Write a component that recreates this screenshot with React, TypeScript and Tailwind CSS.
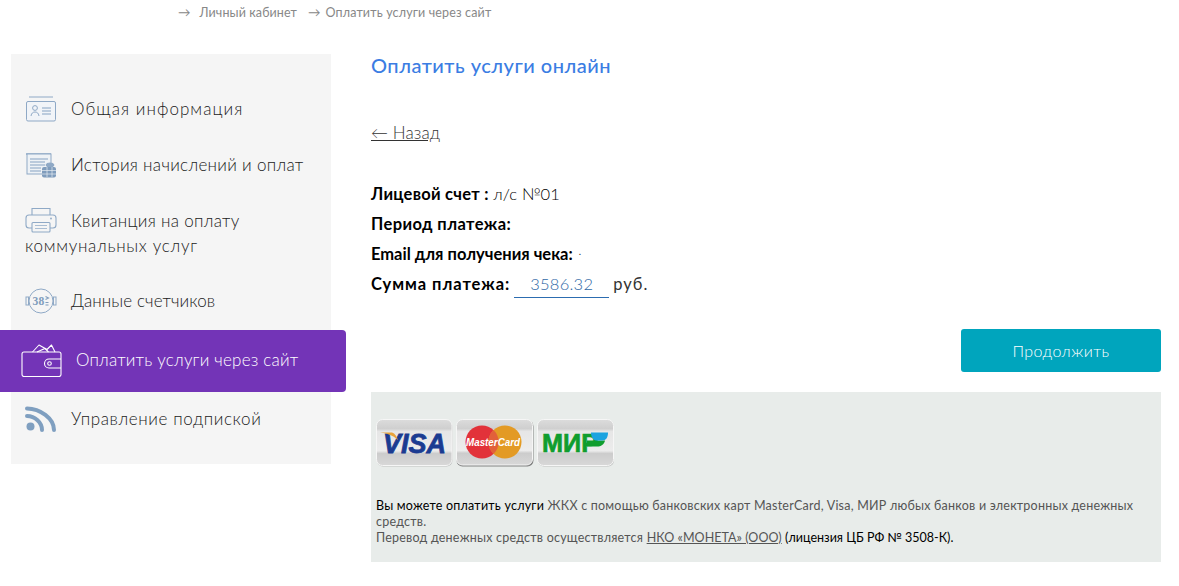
function CardIcon() {
  return (
    <svg width="32" height="26" viewBox="0 0 32 26" fill="none" stroke="#8fa9c6" strokeWidth="1">
      <path d="M4 1h24" />
      <rect x="1.500" y="5.500" width="29" height="19.500" rx="1.500" fill="#f1f4f8" />
      <circle cx="10" cy="12" r="2.400" />
      <path d="M6 20c.5-3 2-4 4-4s3.500 1 4 4" />
      <path d="M17 12h9M17 15h9M17 18h9" stroke="#a9bdd3" strokeWidth="1.400" />
    </svg>
  );
}

function HistoryIcon() {
  return (
    <svg width="32" height="26" viewBox="0 0 32 26" fill="none" stroke="#8fa9c6" strokeWidth="1">
      <path d="M1 2h25" strokeWidth="1.500" />
      <rect x="2" y="2" width="24" height="20" fill="#eef2f6" />
      <path d="M5 7h18M5 10h15M5 13h15M5 16h11M5 19h11" stroke="#a9bdd3" strokeWidth="1.300" />
      <ellipse cx="25" cy="13" rx="4" ry="2" fill="#8fa9c6" />
      <rect x="17" y="15" width="14" height="10.500" rx="2" fill="#7f9cbc" stroke="none" />
      <path d="M22 15v10M27 15v10M17 18.500h14M17 22h14" stroke="#e6ecf2" strokeWidth=".7" />
    </svg>
  );
}

function PrinterIcon() {
  return (
    <svg width="32" height="26" viewBox="0 0 32 26" fill="none" stroke="#8fa9c6" strokeWidth="1.100">
      <path d="M7 8V1.500h18V8" />
      <path d="M7 21H4a3 3 0 0 1-3-3v-7a3 3 0 0 1 3-3h24a3 3 0 0 1 3 3v7a3 3 0 0 1-3 3h-3" />
      <rect x="7" y="15.500" width="18" height="9.500" rx="1" />
      <path d="M10 18.500h12M10 21.500h12" stroke="#a9bdd3" />
      <circle cx="26" cy="11.500" r=".9" fill="#8fa9c6" stroke="none" />
    </svg>
  );
}

function MeterIcon() {
  return (
    <svg width="32" height="26" viewBox="0 0 32 26" fill="none" stroke="#8fa9c6" strokeWidth="1">
      <circle cx="16" cy="13" r="12" />
      <rect x="1" y="9" width="2.500" height="8" />
      <rect x="28.500" y="9" width="2.500" height="8" />
      <text x="7.500" y="17" fontFamily="'Liberation Serif', serif" fontWeight="700" fontSize="11.500" fill="#7f9cbc" stroke="none">38</text>
      <path d="M20.500 8.500l3 1.500-3 1.500M20.500 14.500h3M20.500 17h3" stroke="#7f9cbc" strokeWidth="1.100" />
    </svg>
  );
}

function WalletIcon() {
  return (
    <svg width="41" height="33" viewBox="0 0 41 33" fill="none" stroke="#fff" strokeWidth="1.100">
      <path d="M11.500 8L18 1l8 4.500L30.500 1 34 8" strokeLinejoin="round" />
      <path d="M16 8l8-3.500L27.500 8" />
      <path d="M3 8h35a2 2 0 0 1 2 2v20.500a2 2 0 0 1-2 2H3a2 2 0 0 1-2-2V10a2 2 0 0 1 2-2z" />
      <path d="M40 15H28a4.500 4.500 0 0 0 0 9h12" />
      <circle cx="28.500" cy="19.500" r="1.800" />
    </svg>
  );
}

function RssIcon() {
  return (
    <svg width="32" height="26" viewBox="0 0 32 26" fill="none" stroke="#7f9fc0" strokeWidth="4" strokeLinecap="round">
      <circle cx="5.500" cy="20.500" r="4" fill="#7f9fc0" stroke="none" />
      <path d="M2 10c8 0 15 6.500 15 14" />
      <path d="M2 2.500c13 0 27 10 27 21.500" />
    </svg>
  );
}

function PayLogos() {
  return (
    <div className="flex items-start gap-[3px]">
      <svg width="77" height="48" viewBox="0 0 77 48">
        <defs>
          <linearGradient id="chip" x1="0" y1="0" x2="0" y2="1">
            <stop offset="0" stopColor="#dcdcdc" />
            <stop offset=".2" stopColor="#cfcfcf" />
            <stop offset=".26" stopColor="#e6e6e6" />
            <stop offset=".68" stopColor="#ececec" />
            <stop offset=".74" stopColor="#cccccc" />
            <stop offset="1" stopColor="#d8d8d8" />
          </linearGradient>
        </defs>
        <rect x="1" y="1.500" width="75.500" height="46" rx="6" fill="#9a9a9a" fillOpacity=".5" />
        <rect x=".5" y=".5" width="75.500" height="46" rx="6" fill="url(#chip)" stroke="#f6f6f6" />
        <text x="7" y="34" fontFamily="'Liberation Sans', sans-serif" fontWeight="700" fontStyle="italic" fontSize="28" textLength="63" lengthAdjust="spacingAndGlyphs" fill="#1b3b91" stroke="#1b3b91" strokeWidth=".8">VISA</text>
        <path d="M4 13.500h12c3 1 5 4 6 8-3-4-9-7-18-8z" fill="#e8a33a" />
      </svg>
      <svg width="78" height="48" viewBox="0 0 78 48">
        <rect x=".5" y="1.500" width="77" height="46" rx="6" fill="#555" fillOpacity=".7" />
        <rect x=".5" y=".5" width="76" height="45.500" rx="6" fill="url(#chip)" stroke="#f6f6f6" />
        <circle cx="26" cy="23" r="16.500" fill="#e2323a" />
        <circle cx="49" cy="23" r="16.500" fill="#e39a24" />
        <path d="M37.500 11a16.500 16.500 0 0 1 0 24 16.500 16.500 0 0 1 0-24z" fill="#e2603a" />
        <text x="10" y="27" fontFamily="'Liberation Sans', sans-serif" fontWeight="700" fontStyle="italic" fontSize="10.500" textLength="54" lengthAdjust="spacingAndGlyphs" fill="#fff">MasterCard</text>
      </svg>
      <svg width="78" height="48" viewBox="0 0 78 48">
        <rect x="1" y="1.500" width="76" height="46" rx="6" fill="#9a9a9a" fillOpacity=".5" />
        <rect x=".5" y=".5" width="76" height="46" rx="6" fill="url(#chip)" stroke="#f6f6f6" />
        <text x="5" y="32.500" fontFamily="'Liberation Sans', sans-serif" fontWeight="700" fontSize="26" textLength="56" lengthAdjust="spacingAndGlyphs" fill="#0f9d2e" stroke="#0f9d2e" strokeWidth=".7">МИР</text>
        <path d="M50 21.500h18c-1 4-4 6-8 6H50z" fill="#0f9d2e" />
        <path d="M54 13.500h17c0 5-2 8-6 8H59c-3 0-5-4-5-8z" fill="#1ba3e0" />
      </svg>
    </div>
  );
}

export default function App() {
  return (
    <div className="w-[1179px] h-[586px] overflow-hidden bg-white font-['Lato',sans-serif] text-[#444]">
      <div className="h-[54px] pl-[178px] pt-[4px] text-[12.500px] text-[#888] flex items-start">
        <span>→</span>
        <span className="ml-[9px] tracking-[.1px]">Личный кабинет</span>
        <span className="ml-[11px]">→</span>
        <span className="ml-[5px] tracking-[.15px]">Оплатить услуги через сайт</span>
      </div>
      <div className="flex">
        <aside className="w-[320px] h-[410px] ml-[11px] bg-[#f5f5f5] pt-[27px] text-[17px] font-light text-[#222] tracking-[.3px]">
          <div className="flex items-center gap-[14px] pl-[14px] h-[56px]">
            <CardIcon />
            <span className="tracking-[1.05px]">Общая информация</span>
          </div>
          <div className="flex items-center gap-[14px] pl-[14px] h-[56px]">
            <HistoryIcon />
            <span>История начислений и оплат</span>
          </div>
          <div className="pl-[14px] pt-[14px] h-[80px] leading-[25px]">
            <div className="flex items-center gap-[14px]">
              <PrinterIcon />
              <span>Квитанция на оплату</span>
            </div>
            <div className="tracking-[.7px]">коммунальных услуг</div>
          </div>
          <div className="flex items-center gap-[14px] pl-[14px] h-[56px] mb-[1px]">
            <MeterIcon />
            <span className="tracking-[.1px]">Данные счетчиков</span>
          </div>
          <div className="flex items-center gap-[14px] -ml-[11px] w-[346px] h-[62px] pl-[21px] pb-[2px] bg-[#7334b7] rounded-r-[4px] text-white">
            <WalletIcon />
            <span className="tracking-[.2px]">Оплатить услуги через сайт</span>
          </div>
          <div className="flex items-center gap-[14px] pl-[14px] h-[54px]">
            <RssIcon />
            <span className="tracking-[.6px]">Управление подпиской</span>
          </div>
        </aside>
        <main className="w-[790px] ml-[40px]">
          <h1 className="text-[20px] font-medium leading-[22px] tracking-[.5px] text-[#3b7de3]">Оплатить услуги онлайн</h1>
          <a className="block mt-[45px] text-[17px] leading-[24px] tracking-[.1px] text-[#333] font-light underline">← Назад</a>
          <div className="mt-[34px] text-[16.500px] leading-[30px] text-[#333] tracking-[.25px]">
            <div><b className="font-bold text-black">Лицевой счет :</b> <span className="font-light text-black tracking-[.1px]">л/с №01</span></div>
            <div><b className="font-bold text-black tracking-[.4px]">Период платежа:</b></div>
            <div className="flex items-center">
              <b className="font-bold text-black tracking-[0px]">Email для получения чека:</b>
              <span className="ml-[6px] -mt-[6px] text-[10px] leading-none">.</span>
            </div>
            <div className="flex items-center">
              <b className="font-bold text-black tracking-[.95px]">Сумма платежа:</b>
              <span className="ml-[4px] w-[95px] h-[27px] border-b border-[#2c6cb0] text-center leading-[27px] text-[#2f68a6] font-light">3586.32</span>
              <span className="ml-[4px] tracking-[1px]">руб.</span>
            </div>
          </div>
          <div className="flex justify-end mt-[30px]">
            <button className="w-[200px] h-[43px] rounded-[3px] bg-[#00a5bd] text-white text-[16px] font-light tracking-[.45px]">Продолжить</button>
          </div>
          <div className="mt-[20px] h-[170px] bg-[#e8ecea] pl-[5px] pt-[27px]">
            <PayLogos />
            <p className="mt-[31px] text-[12.500px] leading-[16px] tracking-[.22px] text-[#555] w-[775px]">
              <span className="text-black">Вы можете оплатить услуги</span> ЖКХ с помощью банковских карт MasterCard, Visa, МИР любых банков и электронных денежных средств.
              <br />
              Перевод денежных средств осуществляется <a className="underline tracking-[.05px]">НКО «МОНЕТА» (ООО)</a> <span className="text-black tracking-[0px]">(лицензия ЦБ РФ № 3508-К).</span>
            </p>
          </div>
        </main>
      </div>
    </div>
  );
}
